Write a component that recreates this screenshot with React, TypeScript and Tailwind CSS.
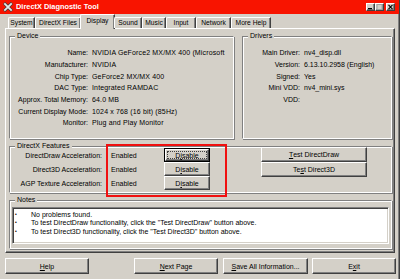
import React from "react";

function Btn({ children, className = "" }: { children: React.ReactNode; className?: string }) {
  return (
    <div
      className={
        "flex items-center justify-center bg-[#d4d0c8] border border-t-white border-l-white border-r-[#404040] border-b-[#404040] shadow-[inset_-1px_-1px_0_#808080] " +
        className
      }
    >
      {children}
    </div>
  );
}

function FocusBtn({ children, className = "" }: { children: React.ReactNode; className?: string }) {
  return (
    <div className={"border border-black bg-[#d4d0c8] " + className}>
      <div className="w-full h-full flex items-center justify-center border border-t-white border-l-white border-r-[#404040] border-b-[#404040] shadow-[inset_-1px_-1px_0_#808080] p-[1px]">
        <div className="w-full h-full flex items-center justify-center outline outline-1 outline-dotted outline-[#404040] -outline-offset-1">
          {children}
        </div>
      </div>
    </div>
  );
}

function Group({
  label,
  className = "",
  children,
}: {
  label: string;
  className?: string;
  children?: React.ReactNode;
}) {
  return (
    <div
      className={
        "relative border border-t-[#808080] border-l-[#808080] border-r-white border-b-white shadow-[inset_1px_1px_0_white,1px_1px_0_#808080] " +
        className
      }
    >
      <span className="absolute left-[5px] top-[-5px] px-[2px] bg-[#d4d0c8] leading-[8px]">{label}</span>
      {children}
    </div>
  );
}

const tabs = [
  { t: "System", w: "w-[27px]" },
  { t: "DirectX Files", w: "w-[46px]" },
  { t: "Display", w: "w-[35px]", sel: true },
  { t: "Sound", w: "w-[28px]" },
  { t: "Music", w: "w-[24px]" },
  { t: "Input", w: "w-[30px]" },
  { t: "Network", w: "w-[35px]" },
  { t: "More Help", w: "w-[40px]" },
];

export default function App() {
  const device: [string, string][] = [
    ["Name:", "NVIDIA GeForce2 MX/MX 400 (Microsoft"],
    ["Manufacturer:", "NVIDIA"],
    ["Chip Type:", "GeForce2 MX/MX 400"],
    ["DAC Type:", "Integrated RAMDAC"],
    ["Approx. Total Memory:", "64.0 MB"],
    ["Current Display Mode:", "1024 x 768 (16 bit) (85Hz)"],
    ["Monitor:", "Plug and Play Monitor"],
  ];
  const drivers: [string, string][] = [
    ["Main Driver:", "nv4_disp.dll"],
    ["Version:", "6.13.10.2958 (English)"],
    ["Signed:", "Yes"],
    ["Mini VDD:", "nv4_mini.sys"],
    ["VDD:", ""],
  ];
  const feats = ["DirectDraw Acceleration:", "Direct3D Acceleration:", "AGP Texture Acceleration:"];

  return (
    <div className="w-[400px] h-[279px] bg-[#d4d0c8] overflow-hidden font-['Liberation_Sans',Arial,sans-serif] text-[7px] leading-none text-black flex flex-col border-r border-r-[#404040] shadow-[inset_-1px_0_0_#808080]">
      {/* Title bar */}
      <div className="h-[14px] bg-[#f81400] flex items-center pl-[3px] pr-[4px] shrink-0">
        <svg width="10" height="10" viewBox="0 0 10 10" className="shrink-0">
          <path d="M1 1 L9 9 M9 1 L1 9" stroke="#404040" strokeWidth="3.2" />
          <path d="M1.3 1.3 L8.7 8.7 M8.7 1.3 L1.3 8.7" stroke="#e8e8e8" strokeWidth="1.8" />
        </svg>
        <span className="ml-[3px] text-white font-bold text-[7.4px]">DirectX Diagnostic Tool</span>
        <div className="ml-auto flex items-center">
          <Btn className="w-[9px] h-[8px]">
            <svg width="7" height="6" viewBox="0 0 7 6">
              <rect x="1" y="4" width="4" height="1.2" fill="#000" />
            </svg>
          </Btn>
          <Btn className="w-[9px] h-[8px]">
            <svg width="7" height="6" viewBox="0 0 7 6">
              <rect x="1" y="0.5" width="5" height="5" fill="none" stroke="#a0a0a0" strokeWidth="1" />
            </svg>
          </Btn>
          <Btn className="w-[9px] h-[8px] ml-[2px]">
            <svg width="7" height="6" viewBox="0 0 7 6">
              <path d="M1.5 0.8 L5.5 5.2 M5.5 0.8 L1.5 5.2" stroke="#000" strokeWidth="1.1" />
            </svg>
          </Btn>
        </div>
      </div>

      {/* Tabs */}
      <div className="h-[14px] flex items-end pl-[8px] shrink-0 relative z-10 text-[6.7px]">
        {tabs.map((tb) =>
          tb.sel ? (
            <div
              key={tb.t}
              className={
                tb.w +
                " h-[15px] -mx-[1px] mb-[-1px] bg-[#d4d0c8] border-l border-t border-l-white border-t-white border-r border-r-[#404040] shadow-[inset_-1px_0_0_#808080] rounded-tl-[2px] flex items-start justify-center pt-[3px]"
              }
            >
              {tb.t}
            </div>
          ) : (
            <div
              key={tb.t}
              className={
                tb.w +
                " h-[11px] border-l border-t border-l-white border-t-white border-r border-r-[#404040] shadow-[inset_-1px_0_0_#808080] rounded-tl-[2px] flex items-center justify-center whitespace-nowrap"
              }
            >
              {tb.t}
            </div>
          )
        )}
      </div>

      {/* Panel */}
      <div className="ml-[5px] w-[390px] h-[225px] shrink-0 border border-t-white border-l-white border-r-[#404040] border-b-[#404040] shadow-[inset_-1px_-1px_0_#808080] pt-[7px] pl-[3px] pr-[2px] flex flex-col">
        <div className="flex gap-[8px]">
          <Group label="Device" className="w-[225px] h-[103px]">
            <div className="grid grid-cols-[78px_1fr] gap-x-[4px] pt-[10px] overflow-hidden whitespace-nowrap">
              {device.map(([l, v]) => (
                <React.Fragment key={l}>
                  <div className="h-[11.7px] flex items-center justify-end">{l}</div>
                  <div className="h-[11.7px] flex items-center overflow-hidden tracking-[0.15px]">{v}</div>
                </React.Fragment>
              ))}
            </div>
          </Group>
          <Group label="Drivers" className="flex-1 h-[103px]">
            <div className="grid grid-cols-[57px_1fr] gap-x-[4px] pt-[10px] whitespace-nowrap">
              {drivers.map(([l, v]) => (
                <React.Fragment key={l}>
                  <div className="h-[11.7px] flex items-center justify-end">{l}</div>
                  <div className="h-[11.7px] flex items-center">{v}</div>
                </React.Fragment>
              ))}
            </div>
          </Group>
        </div>

        <Group label="DirectX Features" className="mt-[7px] h-[47px]">
          <div className="flex pt-[1px]">
            <div className="grid grid-cols-[92px_62px_46px] grid-rows-[14px_14px_14px] whitespace-nowrap">
              {feats.map((f, i) => (
                <React.Fragment key={f}>
                  <div className="flex items-center justify-end">{f}</div>
                  <div className="flex items-center pl-[9px]">Enabled</div>
                  {i === 0 ? (
                    <FocusBtn className="h-[14px]">
                      D<span className="underline">i</span>sable
                    </FocusBtn>
                  ) : (
                    <Btn className="h-[14px]">
                      D<span className="underline">i</span>sable
                    </Btn>
                  )}
                </React.Fragment>
              ))}
            </div>
            <div className="ml-[51px] w-[106px] flex flex-col -mt-[1px]">
              <Btn className="h-[15px]">
                <span className="underline">T</span>est DirectDraw
              </Btn>
              <Btn className="h-[15px]">
                Te<span className="underline">s</span>t Direct3D
              </Btn>
            </div>
          </div>
          <div className="absolute left-[96px] top-[-3px] w-[121px] h-[53px] border-2 border-[#f01010]" />
        </Group>

        <Group label="Notes" className="mt-[7px] h-[49px]">
          <div className="absolute left-[2px] right-[2px] top-[6px] bottom-[4px] bg-white border border-t-[#808080] border-l-[#808080] border-r-white border-b-white shadow-[inset_1px_1px_0_#404040,inset_-1px_-1px_0_#d4d0c8] pt-[2px] pl-[2px]">
            {[
              "No problems found.",
              'To test DirectDraw functionality, click the "Test DirectDraw" button above.',
              'To test Direct3D functionality, click the "Test Direct3D" button above.',
            ].map((n) => (
              <div key={n} className="flex h-[8.5px] items-center whitespace-nowrap">
                <span className="w-[16px] text-[5px]">•</span>
                <span>{n}</span>
              </div>
            ))}
          </div>
        </Group>
      </div>

      {/* Bottom buttons */}
      <div className="flex pl-[5px] mt-[5px]">
        <Btn className="w-[84px] h-[16px]">
          <span className="underline">H</span>elp
        </Btn>
        <Btn className="w-[84px] h-[16px] ml-[45px]">
          <span className="underline">N</span>ext Page
        </Btn>
        <Btn className="w-[85px] h-[16px] ml-[5px]">
          <span className="underline">S</span>ave All Information...
        </Btn>
        <Btn className="w-[84px] h-[16px] ml-[4px]">
          E<span className="underline">x</span>it
        </Btn>
      </div>
    </div>
  );
}
